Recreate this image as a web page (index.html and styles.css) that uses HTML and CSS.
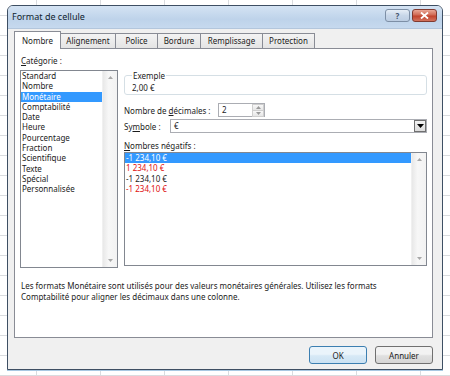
FILE: index.html
```html
<!DOCTYPE html>
<html lang="fr">
<head>
    <meta charset="UTF-8">
    <title>Format de cellule</title>
    <link rel="stylesheet" href="styles.css">
</head>
<body>
    <div class="dialog">
        <div class="titlebar">
            <span class="title">Format de cellule</span>
            <div class="caption-buttons">
                <span class="cap-btn help">?</span>
                <span class="cap-btn close">
                    <svg width="9" height="7" viewBox="0 0 9 7"><path d="M1 0.5 L8 6.5 M8 0.5 L1 6.5" stroke="#fff" stroke-width="1.8"/></svg>
                </span>
            </div>
        </div>

        <div class="dialog-body">
            <div class="tabs">
                <div class="tab active">Nombre</div>
                <div class="tab">Alignement</div>
                <div class="tab">Police</div>
                <div class="tab">Bordure</div>
                <div class="tab">Remplissage</div>
                <div class="tab">Protection</div>
            </div>

            <div class="tab-panel">
                <div class="columns">
                    <div class="category">
                        <div class="label"><u>C</u>atégorie :</div>
                        <div class="listbox cat-list">
                            <ul class="items">
                                <li>Standard</li>
                                <li>Nombre</li>
                                <li class="selected">Monétaire</li>
                                <li>Comptabilité</li>
                                <li>Date</li>
                                <li>Heure</li>
                                <li>Pourcentage</li>
                                <li>Fraction</li>
                                <li>Scientifique</li>
                                <li>Texte</li>
                                <li>Spécial</li>
                                <li>Personnalisée</li>
                            </ul>
                            <div class="vscroll">
                                <svg width="5" height="3" viewBox="0 0 5 3"><path d="M0 3 L2.5 0 L5 3 Z" fill="#a8a8a8"/></svg>
                                <svg width="5" height="3" viewBox="0 0 5 3"><path d="M0 0 L2.5 3 L5 0 Z" fill="#a8a8a8"/></svg>
                            </div>
                        </div>
                    </div>

                    <div class="options">
                        <fieldset class="sample">
                            <legend>Exemple</legend>
                            <div class="sample-value">2,00 €</div>
                        </fieldset>

                        <div class="row decimals">
                            <span class="field-label">Nombre de <u>d</u>écimales :</span>
                            <div class="spin">
                                <span class="spin-value">2</span>
                                <div class="spin-buttons">
                                    <span class="spin-btn"><svg width="5" height="3" viewBox="0 0 5 3"><path d="M0 3 L2.5 0 L5 3 Z" fill="#9a9a9a"/></svg></span>
                                    <span class="spin-btn"><svg width="5" height="3" viewBox="0 0 5 3"><path d="M0 0 L2.5 3 L5 0 Z" fill="#9a9a9a"/></svg></span>
                                </div>
                            </div>
                        </div>

                        <div class="row symbol">
                            <span class="field-label">Sy<u>m</u>bole :</span>
                            <div class="select">
                                <span class="select-value">€</span>
                                <span class="drop-btn"><svg width="7" height="4" viewBox="0 0 7 4"><path d="M0 0 L3.5 4 L7 0 Z" fill="#000"/></svg></span>
                            </div>
                        </div>

                        <div class="label neg-label"><u>N</u>ombres négatifs :</div>
                        <div class="listbox neg-list">
                            <ul class="items">
                                <li class="selected">-1 234,10 €</li>
                                <li class="red">1 234,10 €</li>
                                <li>-1 234,10 €</li>
                                <li class="red">-1 234,10 €</li>
                            </ul>
                            <div class="vscroll">
                                <svg width="5" height="3" viewBox="0 0 5 3"><path d="M0 3 L2.5 0 L5 3 Z" fill="#a8a8a8"/></svg>
                                <svg width="5" height="3" viewBox="0 0 5 3"><path d="M0 0 L2.5 3 L5 0 Z" fill="#a8a8a8"/></svg>
                            </div>
                        </div>
                    </div>
                </div>

                <p class="hint">Les formats Monétaire sont utilisés pour des valeurs monétaires générales. Utilisez les formats<br>Comptabilité pour aligner les décimaux dans une colonne.</p>
            </div>

            <div class="actions">
                <button class="btn default">OK</button>
                <button class="btn">Annuler</button>
            </div>
        </div>
    </div>
</body>
</html>
```

FILE: styles.css
```css
html, body {
    margin: 0;
    height: 100%;
}
body {
    font-family: "Noto Sans", "DejaVu Sans", sans-serif;
    font-size: 8px;
    color: #1b1b1b;
    overflow: hidden;
    background-color: #fff;
    background-image:
        linear-gradient(to right, #dadcdf 1px, transparent 1px),
        linear-gradient(to bottom, #dadcdf 1px, transparent 1px);
    background-size: 64px 20px;
    background-position: 36px 15px;
}
u {
    text-decoration: underline;
    text-underline-offset: 1px;
}

/* window frame */
.dialog {
    margin: 5px 0 0 7px;
    width: 436px;
    height: 365px;
    box-sizing: border-box;
    border: 1px solid #3e4f63;
    border-radius: 6px 6px 0 0;
    background: #f0f0f0;
    box-shadow: 0 1px 0 #a8c8e2;
    display: flex;
    flex-direction: column;
    overflow: hidden;
}
.titlebar {
    height: 22px;
    flex: none;
    display: flex;
    justify-content: space-between;
    align-items: flex-start;
    padding: 0 5px 0 4px;
    background: linear-gradient(#d4e3f3, #bed3ea 60%, #c6d9ee);
    border-bottom: 1px solid #b3c6dc;
}
.title {
    font-size: 9px;
    line-height: 21px;
    color: #0f1d2e;
}
.caption-buttons {
    display: flex;
    gap: 2px;
    padding-top: 3px;
}
.cap-btn {
    width: 25px;
    height: 13px;
    box-sizing: border-box;
    border-radius: 3px;
    display: flex;
    align-items: center;
    justify-content: center;
}
.help {
    border: 1px solid #7d8fa6;
    background: linear-gradient(#e6eef7, #c8d7e9 50%, #bccde2);
    color: #44556b;
    font-size: 8px;
    font-weight: bold;
}
.close {
    border: 1px solid #803a30;
    background: linear-gradient(#eaa796, #d06a55 45%, #c2432d 55%, #d2735e);
}

/* body */
.dialog-body {
    flex: 1;
    padding: 2px 9px 0 6px;
}
.tabs {
    display: flex;
    align-items: flex-end;
    height: 17px;
}
.tab {
    height: 15px;
    box-sizing: border-box;
    margin-right: -1px;
    border: 1px solid #898c95;
    border-bottom: none;
    background: linear-gradient(#f3f3f3, #e4e4e4);
    line-height: 13px;
    text-align: center;
}
.tab:nth-child(1) { width: 47px; }
.tab:nth-child(2) { width: 56px; }
.tab:nth-child(3) { width: 43px; }
.tab:nth-child(4) { width: 44px; }
.tab:nth-child(5) { width: 63px; }
.tab:nth-child(6) { width: 53px; }
.tab.active {
    height: 18px;
    margin-bottom: -1px;
    background: #fff;
    position: relative;
    z-index: 1;
    line-height: 17px;
}
.tab-panel {
    height: 290px;
    box-sizing: border-box;
    border: 1px solid #898c95;
    background: #fff;
    padding: 6px 5px 0 5px;
}
.columns {
    display: grid;
    grid-template-columns: 98px 303px;
    gap: 6px;
}
.label {
    line-height: 11px;
    padding-left: 1px;
    margin-bottom: 4px;
}

/* list boxes */
.listbox {
    box-sizing: border-box;
    border: 1px solid #828790;
    display: flex;
    background: #fff;
}
.cat-list {
    height: 198px;
}
.neg-list {
    height: 114px;
}
.items {
    flex: 1;
    list-style: none;
    margin: 0;
    padding: 0;
}
.items li {
    line-height: 10.3px;
    padding-left: 1px;
    white-space: nowrap;
}
.items li.selected {
    background: #3399ff;
    color: #fff;
}
.items li.red {
    color: #e01010;
}
.vscroll {
    width: 14px;
    flex: none;
    background: linear-gradient(90deg, #e8e8e8, #f7f7f7 40%, #f2f2f2);
    border-left: 1px solid #f0f0f0;
    display: flex;
    flex-direction: column;
    justify-content: space-between;
    align-items: center;
    padding: 5px 0;
}

/* right column */
.options {
    padding-top: 15px;
}
.sample {
    margin: 0;
    padding: 0 6px 1px 7px;
    border: 1px solid #d5dfe5;
    border-radius: 3px;
}
.sample legend {
    padding: 0 1px;
    line-height: 11px;
}
.sample-value {
    line-height: 11px;
    padding-top: 1px;
}
.row {
    display: flex;
    align-items: center;
    height: 14px;
}
.decimals {
    margin-top: 8px;
}
.symbol {
    margin-top: 2px;
}
.decimals .field-label {
    width: 94px;
}
.symbol .field-label {
    width: 46px;
}
.spin {
    width: 47px;
    height: 14px;
    box-sizing: border-box;
    border: 1px solid #abadb3;
    display: flex;
    justify-content: space-between;
}
.spin-value {
    padding-left: 3px;
    line-height: 12px;
}
.spin-buttons {
    width: 12px;
    display: flex;
    flex-direction: column;
}
.spin-btn {
    flex: 1;
    border: 1px solid #cfcfcf;
    margin-bottom: -1px;
    background: linear-gradient(#f8f8f8, #e6e6e6);
    display: flex;
    align-items: center;
    justify-content: center;
}
.select {
    flex: 1;
    height: 14px;
    box-sizing: border-box;
    border: 1px solid #abadb3;
    display: flex;
    justify-content: space-between;
}
.select-value {
    padding-left: 3px;
    line-height: 12px;
}
.drop-btn {
    width: 12px;
    box-sizing: border-box;
    border: 1px solid #707070;
    background: linear-gradient(#f2f2f2, #dcdcdc);
    display: flex;
    align-items: center;
    justify-content: center;
}
.neg-label {
    margin-top: 7px;
    margin-bottom: 1px;
    padding-left: 0;
}

.hint {
    margin: 12px 0 0 1px;
    line-height: 11px;
    white-space: nowrap;
}

/* buttons */
.actions {
    display: flex;
    justify-content: flex-end;
    gap: 8px;
    margin-top: 8px;
}
.btn {
    width: 58px;
    height: 18px;
    padding: 0;
    font-family: inherit;
    font-size: 8px;
    color: #1b1b1b;
    border: 1px solid #707070;
    border-radius: 3px;
    background: linear-gradient(#f2f2f2 45%, #e0e0e0 55%, #d6d6d6);
}
.btn.default {
    border-color: #3c7fb1;
    background: linear-gradient(#eaf4fb 45%, #d7e9f6 55%, #cbe2f3);
}
```
